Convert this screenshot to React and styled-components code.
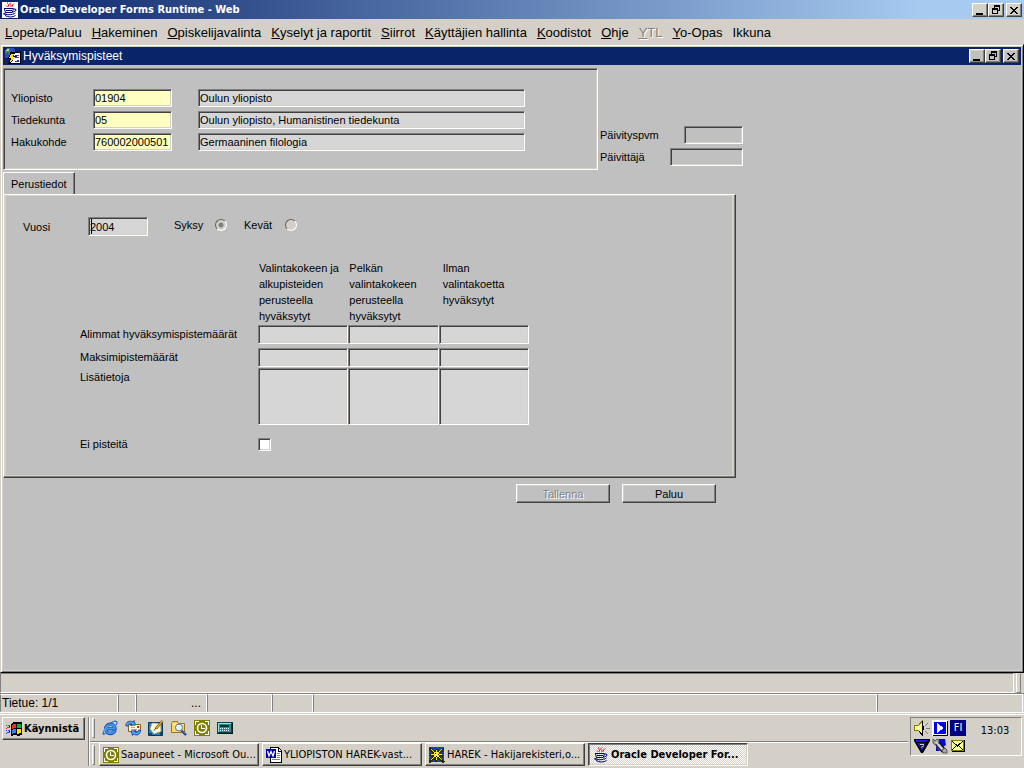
import React, { useState } from 'react';
import styled, { createGlobalStyle, css } from 'styled-components';

const GlobalStyle = createGlobalStyle`
  * {
    box-sizing: border-box;
  }

  body {
    margin: 0;
    background: #d4d0c8;
    color: #000;
    font-family: "Liberation Sans", Arial, sans-serif;
    font-size: 11px;
  }

  button, input, textarea {
    margin: 0;
    border-radius: 0;
    color: inherit;
    font: inherit;
    outline: none;
  }
`;

const raised = css`
  border: 1px solid;
  border-color: #fff #404040 #404040 #fff;
  box-shadow: inset -1px -1px #808080, inset 1px 1px #d4d0c8;
`;

const sunken = css`
  border: 1px solid;
  border-color: #808080 #fff #fff #808080;
  box-shadow: inset 1px 1px #404040, inset -1px -1px #d4d0c8;
`;

const Desktop = styled.div`
  display: flex;
  flex-direction: column;
  min-height: 100vh;
`;

/* ---- window chrome ---- */

const TitleBar = styled.header`
  display: flex;
  align-items: center;
  gap: 2px;
  height: 19px;
  padding: 0 2px;
  background: linear-gradient(to right, #0a246a, #a6caf0 90%);
  color: #fff;
  font: bold 11px/16px "DejaVu Sans Condensed", "DejaVu Sans", sans-serif;
`;

const InnerTitleBar = styled.header`
  display: flex;
  align-items: center;
  gap: 2px;
  height: 18px;
  padding: 0 2px;
  background: #0a246a;
  color: #fff;
  font-size: 12px;
`;

const WindowButtons = styled.div`
  display: flex;
  margin-left: auto;
`;

const WindowButton = styled.button`
  ${raised}
  display: flex;
  width: 16px;
  height: 14px;
  padding: 1px 2px;
  background: ${(props) => props.$face};
  color: #000;

  &:last-child {
    margin-left: 2px;
  }
`;

const MenuBar = styled.nav`
  display: flex;
  flex-wrap: wrap;
  gap: 10px;
  min-height: 25px;
  padding: 4px 5px 0;
`;

const MenuItem = styled.button`
  height: 20px;
  padding: 0;
  border: 0;
  background: none;
  font-size: 13px;
  line-height: 20px;

  &:disabled {
    color: #808080;
    text-shadow: 1px 1px #fff;
  }
`;

const InnerWindow = styled.main`
  display: flex;
  flex: 1;
  flex-direction: column;
  padding: 2px;
  border: 1px solid;
  border-color: #d4d0c8 #000 #000 #d4d0c8;
  background: #d4d0c8;
  box-shadow: inset 1px 1px #fff, inset -1px -1px #808080;
`;

const Canvas = styled.form`
  flex: 1;
  padding-top: 3px;
  background: #c0c0c0;
`;

/* ---- form ---- */

const TopArea = styled.div`
  display: flex;
  align-items: flex-end;
  gap: 2px;
`;

const KeyFrame = styled.section`
  ${sunken}
  display: grid;
  grid-template-columns: 82px 79px 353px;
  row-gap: 4px;
  width: 595px;
  padding: 20px 7px 18px;
`;

const Label = styled.label`
  line-height: 18px;
`;

const Field = styled.input`
  ${sunken}
  display: block;
  width: ${(props) => props.$width || '100%'};
  height: ${(props) => props.$height || '18px'};
  padding: 0 1px;
  background: ${(props) => props.$color || '#d6d6d6'};
`;

const NameField = styled(Field)`
  width: auto;
  margin-left: 26px;
`;

const UpdateInfo = styled.section`
  display: flex;
  flex-direction: column;
  gap: 4px;
  width: 143px;
  padding-bottom: 4px;
`;

const UpdateRow = styled.div`
  display: flex;
  justify-content: space-between;
`;

const Tab = styled.button`
  display: block;
  height: 23px;
  margin: 2px 0 -1px;
  padding: 0 7px;
  border: 1px solid;
  border-color: #fff #404040 #c0c0c0 #fff;
  background: #c0c0c0;
  box-shadow: inset -1px 0 #808080;
`;

const TabPanel = styled.section`
  width: 733px;
  padding: 22px 20px 26px 19px;
  border: 1px solid;
  border-color: #fff #404040 #404040 #fff;
  box-shadow: inset -1px -1px #808080, inset 2px 1px #d4d0c8, inset -3px -2px #d4d0c8;
`;

const YearRow = styled.div`
  display: flex;
  align-items: center;
`;

const YearLabel = styled(Label)`
  width: 65px;
`;

const CaretBox = styled.span`
  position: relative;
  margin-right: 26px;

  &::after {
    content: "";
    position: absolute;
    top: 2px;
    left: 3px;
    width: 1px;
    height: 15px;
    background: #000;
  }
`;

const RadioLabel = styled.label`
  display: flex;
  align-items: center;
  justify-content: space-between;
  width: 53px;
  height: 16px;
  margin-right: 17px;
  align-self: flex-start;
`;

const Radio = styled.input`
  appearance: none;
  width: 12px;
  height: 12px;
  margin: 0;
  border: 1px solid;
  border-color: #606060 #fff #fff #606060;
  border-radius: 50%;
  background: #d4d0c8;

  &:checked {
    background: radial-gradient(circle, #808080 2px, #d4d0c8 3px);
  }
`;

const ScoreTable = styled.table`
  margin: 24px 0 0 57px;
  border-collapse: collapse;
  table-layout: fixed;
  width: 449px;

  th {
    padding: 0;
    font-weight: normal;
    text-align: left;
    vertical-align: top;
  }

  thead th {
    height: 65px;
    padding-left: 1px;
    line-height: 16px;
    white-space: pre-line;
  }

  thead th:last-child {
    padding-left: 4px;
  }

  tbody th {
    line-height: 19px;
  }

  td {
    padding: 0;
    vertical-align: top;
  }
`;

const LabelCol = styled.col`
  width: 178px;
`;

const FieldSpacer = styled.div`
  padding-bottom: ${(props) => props.$gap};
`;

const Notes = styled.textarea`
  ${sunken}
  display: block;
  width: 100%;
  height: 57px;
  padding: 1px;
  background: #d6d6d6;
  resize: none;
`;

const CheckRow = styled.div`
  display: flex;
  align-items: center;
  margin: 13px 0 0 57px;
`;

const CheckLabel = styled.label`
  width: 178px;
  line-height: 13px;
`;

const Checkbox = styled.input`
  ${sunken}
  appearance: none;
  width: 13px;
  height: 13px;
  background: #fff;
`;

const ButtonRow = styled.div`
  display: flex;
  justify-content: flex-end;
  gap: 12px;
  width: 733px;
  padding: 6px 20px 0 0;
`;

const FormButton = styled.button`
  ${raised}
  width: 94px;
  height: 19px;
  padding: 1px 0 0;
  background: #c0c0c0;

  &:disabled {
    color: #808080;
    text-shadow: 1px 1px #fff;
  }
`;

/* ---- status lines ---- */

const MessageLine = styled.div`
  display: flex;
  gap: 2px;
  height: 20px;
  padding-right: 3px;
`;

const MessageBox = styled.div`
  flex: ${(props) => (props.$grip ? '0 0 5px' : '1')};
  border: 1px solid;
  border-color: #808080 #fff #fff #808080;
  ${(props) => props.$grip && 'border-color: #d4d0c8 #808080 #808080 #fff;'}
`;

const StatusLine = styled.footer`
  display: flex;
  height: 20px;
  padding-right: 1px;
  border-top: 1px solid #808080;
  border-bottom: 1px solid #fff;
`;

const StatusCell = styled.div`
  flex: ${(props) => (props.$width ? `0 0 ${props.$width}` : '1')};
  padding: 0 5px 0 1px;
  border: 1px solid;
  border-color: #fff #fff #d4d0c8 #808080;
  font-size: 12px;
  line-height: 17px;
  text-align: ${(props) => props.$align || 'left'};
`;

/* ---- taskbar ---- */

const Taskbar = styled.footer`
  display: flex;
  align-items: flex-start;
  height: 54px;
  margin-top: 1px;
  padding: 2px 2px 0;
  border-top: 1px solid #fff;
  font: 11px/16px "DejaVu Sans Condensed", "DejaVu Sans", sans-serif;
`;

const StartButton = styled.button`
  ${raised}
  display: flex;
  align-items: center;
  gap: 2px;
  width: 83px;
  height: 23px;
  padding: 0 3px;
  background: #d4d0c8;
  font-weight: bold;
  white-space: nowrap;
`;

const Bands = styled.div`
  flex: 1;
  min-width: 0;
  margin: 0 2px 0 3px;
  border-left: 1px solid #808080;
  box-shadow: inset 1px 0 #fff;
`;

const Band = styled.div`
  display: flex;
  align-items: center;
  gap: ${(props) => props.$gap};
  height: 24px;
  padding: 0 0 2px 3px;

  & + & {
    height: 25px;
    margin-left: 1px;
    padding: 1px 0 0 2px;
    border-top: 1px solid #808080;
    box-shadow: inset 0 1px #fff;
  }
`;

const Handle = styled.span`
  flex: none;
  width: 3px;
  height: 20px;
  border: 1px solid;
  border-color: #fff #808080 #808080 #fff;
`;

const QuickButton = styled.button`
  display: flex;
  width: 16px;
  height: 16px;
  padding: 0;
  border: 0;
  background: none;
`;

const Tasks = styled.div`
  display: flex;
  flex: 1;
  gap: 3px;
  min-width: 0;
  padding-left: 1px;
`;

const TaskButton = styled.button`
  ${raised}
  display: flex;
  align-items: center;
  gap: 2px;
  flex: 0 1 160px;
  min-width: 0;
  height: 23px;
  padding: 0 2px 0 3px;
  background: #d4d0c8;
  white-space: nowrap;

  ${(props) => props.$active && css`
    padding: 1px 1px 0 4px;
    border-color: #404040 #fff #fff #404040;
    box-shadow: inset 1px 1px #808080, inset -1px -1px #d4d0c8;
    background: repeating-conic-gradient(#fff 0 25%, #d4d0c8 0 50%) 0 0 / 2px 2px;
    font-weight: bold;
  `}
`;

const Tray = styled.div`
  display: flex;
  width: 112px;
  height: 39px;
  border: 1px solid;
  border-color: #808080 #fff #fff #808080;
`;

const TrayIcons = styled.div`
  display: grid;
  grid-template-columns: repeat(3, 16px);
  gap: 2px;
  padding: 2px 3px;
`;

const Language = styled.span`
  width: 16px;
  height: 16px;
  background: #000080;
  color: #fff;
  text-align: center;
`;

const Clock = styled.time`
  flex: 1;
  padding-top: 5px;
  text-align: center;
`;

/* ---- icons, all drawn on a 16x16 grid ---- */

const Svg = styled.svg`
  display: block;
  flex: none;
`;

function Icon({ children, smooth }) {
  return (
    <Svg width="16" height="16" viewBox="0 0 16 16" fill="none" aria-hidden="true"
      shapeRendering={smooth ? 'auto' : 'crispEdges'}>
      {children}
    </Svg>
  );
}

function JavaIcon({ boxed }) {
  return (
    <Icon smooth>
      {boxed && <path fill="#fff" d="M0 0h16v16H0z" />}
      <path stroke="#e01010" d="M5.5 0.5v1l1 1v2M9 .5l-1.500 1.500 1.500 1.500v1.500M12 1.500l-1.500 1.500v1.500M4 3.500l1.500 1.500" />
      <path stroke="#000080" d="M2 6.500h9.500M2.500 7l1 3.500h6.500l1.500-3.500M11.500 7h2l.5 1.500-3.500 2M4 8.500h6M1 11.500c1.500 1.700 10 1.700 12.500-.5M3 13.500c3 2 8 2 10.500 0M2 11.500l3-1" />
    </Icon>
  );
}

function FormsIcon() {
  return (
    <Icon>
      <path fill="#408060" d="M2 0h5l3 3v5l-3 3H2L0 8V3z" />
      <path fill="#3048c0" d="M5 0h3l2 2v3H6zM1 5l3 1v4H2L0 8z" />
      <path fill="#b0d0c0" d="M2 1h2v2H1z" />
      <path fill="#000" d="M5 4h11v12H5z" />
      <path fill="#fff" d="M6 5h9v10H6z" />
      <path stroke="#2030c0" d="M7 5.500h1M12 12.500h2M10 13.500h4" />
      <path fill="#2030c0" d="M10 7h2v3h-2z" />
      <path fill="#e02020" d="M12 7h2v1h-2zM12 9h2v1h-2z" />
      <path fill="#000" d="M6 5h4l-1 3h2l-6 8H3l2-5H2z" />
      <path fill="#ffe800" d="M6 6h3L8 9h2l-5 5 1-4H4z" />
    </Icon>
  );
}

function WindowsIcon() {
  return (
    <Icon>
      <path fill="#000" d="M5 3l3-2 3 .5L15 1l1 1v12l-4 1-3-1-4 1z" />
      <path fill="#f03030" d="M6 4l2-1.500 2 .5v4l-2-.5L6 8z" />
      <path fill="#00b040" d="M11 3l4-.5v4l-4 1z" />
      <path fill="#3080ff" d="M6 9l2-1 2 .5v4l-2-.5-2 1z" />
      <path fill="#ffe000" d="M11 8.500l4-1v4.500l-4 1z" />
      <path stroke="#e03030" d="M0 4.500h1M2 4.500h2M1 6.500h3M0 7.500h1" />
      <path stroke="#2050d0" d="M0 9.500h1M2 9.500h2M1 11.500h3M0 12.500h1" />
      <path stroke="#000" d="M3 5.500h1M3 10.500h1" />
    </Icon>
  );
}

function ExplorerIcon() {
  return (
    <Icon smooth>
      <path stroke="#1848a8" strokeWidth="3.400" d="M13 10.500c-1.200 2.300-3 3-4.800 3-2.700 0-4.500-1.800-4.500-4.500s2-4.700 4.600-4.700S13 6 13 8.700H5" />
      <path stroke="#3c98f0" strokeWidth="2" d="M12.800 10.500c-1.200 2.200-2.800 2.800-4.600 2.800-2.500 0-4.300-1.800-4.300-4.300s1.900-4.500 4.400-4.500S12.800 6 12.800 8.500H5" />
      <path stroke="#2868d0" strokeWidth="1.200" d="M3 13.500c-3 3.200-2.500-2.500 2-7.500 3.500-3.800 8-5.500 9.500-4.500 1 .8.5 2-.5 3.500" />
      <path stroke="#90d4ff" strokeWidth=".8" d="M2 12c0-2 2-5 4.500-7" />
    </Icon>
  );
}

function OutlookExpressIcon() {
  return (
    <Icon smooth>
      <path fill="#fffbd8" stroke="#806820" d="M3.500 4.500h12v7h-12z" />
      <path stroke="#c8a850" d="M6 9.500h6M6 7.500h4" />
      <path fill="#e02020" d="M12 6h2v2h-2z" />
      <path fill="#50a8ff" stroke="#103890" strokeWidth=".8" d="M1 6c-1-4 4-6 7-4l1-1.500 1.500 4.500-5 .5L7 4C5 3 3 4 3 6zM15.500 10c0 5-4 6-7 4l-1 1.500L6 11l5-.5-1.500 1.500c2 1 4 0 4-2z" />
    </Icon>
  );
}

function DesktopIcon() {
  return (
    <Icon smooth>
      <path fill="#2080c0" stroke="#003858" d="M.5 2.500h14v13H.5z" />
      <path fill="#184868" d="M1 13h3v2H1zM12 11h2v4h-2z" />
      <path fill="#fff8dc" stroke="#b09850" strokeWidth=".6" d="M4 3l8.500.500.5 8-7 2.500-4-5z" />
      <path stroke="#403000" strokeWidth="2.400" d="M14.500 1L8 8.500" />
      <path stroke="#f8b830" strokeWidth="1.200" d="M14.500 1L8 8.500" />
      <path stroke="#303030" d="M8 8l-2 2.500" />
    </Icon>
  );
}

function SearchIcon() {
  return (
    <Icon smooth>
      <path fill="#f8d868" stroke="#987810" d="M.5 3.500l1-2h5l1 2h6v9H.5z" />
      <path stroke="#fff4b0" d="M1.500 4.500h11" />
      <circle cx="8" cy="7.500" r="3.500" fill="#e0f4ff" stroke="#607890" />
      <path stroke="#203878" strokeWidth="2.400" d="M10.500 10.500l4.500 4.500" />
      <path stroke="#5890e0" d="M10.500 10l4 4" />
    </Icon>
  );
}

function OutlookIcon() {
  return (
    <Icon>
      <path fill="#808000" d="M0 0h16v16H0z" />
      <path stroke="#fff" d="M1.500 5V1.500H5M11 1.500h3.500V5M1.500 11v3.500H5M11 14.500h3.500V11" />
      <circle cx="8" cy="8" r="4.500" stroke="#fff" strokeWidth="1.600" shapeRendering="auto" />
      <path stroke="#fff" d="M7.500 5v3.500H11" />
    </Icon>
  );
}

function TerminalIcon() {
  return (
    <Icon>
      <path fill="#004848" d="M0 2h16v12H0z" />
      <path fill="#209090" d="M1 3h13v9H1z" />
      <path fill="#90e8e0" d="M1 3h13v1H1zM1 4h1v8H1z" />
      <path fill="#003030" d="M3 5h9v2H3z" />
      <path stroke="#e8ffff" strokeDasharray="1 1" d="M3 8.500h9M3 10.500h9" />
      <path stroke="#001818" d="M2 13.500h14M15.500 3v11" />
    </Icon>
  );
}

function WordIcon() {
  return (
    <Icon>
      <path fill="#fff" stroke="#000" d="M4.500.5h8l3 3v12h-11z" />
      <path stroke="#000" d="M12.500 1v3h3" />
      <path stroke="#808080" d="M11 6.500h3M11 8.500h3M11 10.500h3M6 12.500h8" />
      <path fill="#0000a8" d="M0 2h10v9H0z" />
      <path stroke="#fff" strokeWidth="1.300" shapeRendering="auto" d="M1.500 4l1.500 5 2-4.500L7 9l1.500-5" />
    </Icon>
  );
}

function HarekIcon() {
  return (
    <Icon>
      <path fill="#1048b0" d="M0 0h15v15H0z" />
      <path fill="#302800" d="M1 0l5 4 2-3 2 3 5-3v2l-3 4 3 2-3 1 4 5-2 1-5-4-2 4-2-4-4 4-2-1 4-5-3-2 3-2-3-4z" />
      <path stroke="#ffe820" strokeWidth="1.200" d="M2 2l11 11M13 2L2 13M7.500 3v10M2 7.500h11" />
      <path fill="#ffe820" d="M5 5h5v5H5z" />
      <path fill="#302800" d="M6 6h1v1H6zM9 7h1v1H9zM7 9h1v1H7z" />
      <path fill="#fff890" d="M7 7h2v1H7z" />
    </Icon>
  );
}

function SpeakerIcon() {
  return (
    <Icon>
      <path fill="#ffff60" stroke="#808000" d="M.5 5.500h4l4-5v15l-4-5h-4z" />
      <path stroke="#fff" d="M4.500 6v4" />
      <path stroke="#000" d="M8.500.5v15M5.500 11.500l3 4M9.500 6v4" />
      <path stroke="#808080" d="M11 5.500l3-2M12 8.500h4M11 11.500l3 2" />
    </Icon>
  );
}

function PlayerIcon() {
  return (
    <Icon>
      <path fill="#fff" d="M0 0h16v16H0z" />
      <path fill="#000" d="M15 1h1v15H1v-1h14z" />
      <path fill="#0000f8" d="M2 2h12v12H2z" />
      <path fill="#fff" d="M5 3l7 5-7 5z" />
    </Icon>
  );
}

function ShieldIcon() {
  return (
    <Icon smooth>
      <path fill="#000" d="M0 1h16v2L9 15H7L0 3z" />
      <path fill="#1818f0" d="M1 2h13L8 12.500z" />
      <path stroke="#000" d="M3 4.500h11M6 8.500l6-3" />
      <path stroke="#d4d0c8" d="M6 6.500h4M7 9.500l3-2" />
    </Icon>
  );
}

function ToolIcon() {
  return (
    <Icon smooth>
      <path fill="#0808d0" d="M7 1h6l1 6-3 2-4-4zM4 8l4 5H4z" />
      <path stroke="#000" strokeWidth="5" d="M4 4l8 9" />
      <path stroke="#a8a8a8" strokeWidth="3" d="M4 4l8 9" />
      <path fill="#a8a8a8" stroke="#404040" strokeWidth=".8" d="M1 1l2 2 2-2 2 1v3L4 7 1 5zM10 12l3-2 2 2v3h-4z" />
      <path stroke="#fff" d="M4 4l6 7" />
    </Icon>
  );
}

function MailIcon() {
  return (
    <Icon>
      <path fill="#ffffa0" stroke="#808000" d="M1.500 2.500h12v10h-12z" />
      <path stroke="#000" d="M14.500 2v11.500H1.500M2 3l5.500 5L13 3M2 12l4-4M13 12L9 8" />
      <path stroke="#fff" d="M3 11.500h9" />
    </Icon>
  );
}

function Glyph({ type }) {
  return (
    <Svg width="10" height="10" viewBox="0 0 10 10" fill="none" stroke="#000" shapeRendering="crispEdges" aria-hidden="true">
      {type === 'min' && <path strokeWidth="2" d="M1 9h7" />}
      {type === 'restore' && <path d="M3 .5h6M3 1.500h6M3.500 2v1M8.500 2v4M7 5.500h2M1 3.500h6M1 4.500h6M1.500 5v4M6.500 5v4M1 8.500h6" />}
      {type === 'close' && <path fill="#000" stroke="none" d="M1 2h2v1h1v1h2V3h1V2h2v1H8v1H7v1H6v1h1v1h1v1h1v1H7V8H6V7H4v1H3v1H1V8h1V7h1V6h1V5H3V4H2V3H1z" />}
    </Svg>
  );
}

function Controls({ face }) {
  return (
    <WindowButtons>
      <WindowButton type="button" $face={face} aria-label="Pienennä"><Glyph type="min" /></WindowButton>
      <WindowButton type="button" $face={face} aria-label="Palauta"><Glyph type="restore" /></WindowButton>
      <WindowButton type="button" $face={face} aria-label="Sulje"><Glyph type="close" /></WindowButton>
    </WindowButtons>
  );
}

const menus = [
  'Lopeta/Paluu', 'Hakeminen', 'Opiskelijavalinta', 'Kyselyt ja raportit', 'Siirrot',
  'Käyttäjien hallinta', 'Koodistot', 'Ohje', 'YTL', 'Yo-Opas', 'Ikkuna',
];

const keys = [
  { id: 'yliopisto', label: 'Yliopisto', code: '01904', name: 'Oulun yliopisto' },
  { id: 'tiedekunta', label: 'Tiedekunta', code: '05', name: 'Oulun yliopisto, Humanistinen tiedekunta' },
  { id: 'hakukohde', label: 'Hakukohde', code: '760002000501', name: 'Germaaninen filologia' },
];

const columns = [
  'Valintakokeen ja\nalkupisteiden\nperusteella\nhyväksytyt',
  'Pelkän\nvalintakokeen\nperusteella\nhyväksytyt',
  'Ilman\nvalintakoetta\nhyväksytyt',
];

const scoreRows = [
  { label: 'Alimmat hyväksymispistemäärät', gap: '4px' },
  { label: 'Maksimipistemäärät', gap: '1px' },
  { label: 'Lisätietoja', notes: true },
];

const quickLaunch = [
  { name: 'Internet Explorer', icon: <ExplorerIcon /> },
  { name: 'Outlook Express', icon: <OutlookExpressIcon /> },
  { name: 'Työpöytä', icon: <DesktopIcon /> },
  { name: 'Etsi', icon: <SearchIcon /> },
  { name: 'Outlook', icon: <OutlookIcon /> },
  { name: 'Pääte', icon: <TerminalIcon /> },
];

const tasks = [
  { title: 'Saapuneet - Microsoft Ou...', icon: <OutlookIcon /> },
  { title: 'YLIOPISTON HAREK-vast...', icon: <WordIcon /> },
  { title: 'HAREK - Hakijarekisteri,o...', icon: <HarekIcon /> },
  { title: 'Oracle Developer For...', icon: <JavaIcon />, active: true },
];

function App() {
  const [term, setTerm] = useState('syksy');

  return (
    <Desktop>
      <GlobalStyle />
      <TitleBar>
        <JavaIcon boxed />
        <span>Oracle Developer Forms Runtime - Web</span>
        <Controls face="#d4d0c8" />
      </TitleBar>
      <MenuBar>
        {menus.map((menu) => (
          <MenuItem key={menu} type="button" disabled={menu === 'YTL'}>
            {menu === 'Ikkuna' ? menu : <><u>{menu[0]}</u>{menu.slice(1)}</>}
          </MenuItem>
        ))}
      </MenuBar>

      <InnerWindow>
        <InnerTitleBar>
          <FormsIcon />
          <span>Hyväksymispisteet</span>
          <Controls face="#c0c0c0" />
        </InnerTitleBar>
        <Canvas onSubmit={(e) => e.preventDefault()}>
          <TopArea>
            <KeyFrame>
              {keys.map((row) => (
                <React.Fragment key={row.id}>
                  <Label htmlFor={row.id}>{row.label}</Label>
                  <Field id={row.id} $color="#ffffc0" defaultValue={row.code} />
                  <NameField aria-label={row.label + ' nimi'} value={row.name} readOnly />
                </React.Fragment>
              ))}
            </KeyFrame>
            <UpdateInfo>
              <UpdateRow>
                <Label htmlFor="paivityspvm">Päivityspvm</Label>
                <Field id="paivityspvm" $width="59px" $color="#c0c0c0" readOnly />
              </UpdateRow>
              <UpdateRow>
                <Label htmlFor="paivittaja">Päivittäjä</Label>
                <Field id="paivittaja" $width="73px" $color="#c0c0c0" readOnly />
              </UpdateRow>
            </UpdateInfo>
          </TopArea>

          <Tab type="button">Perustiedot</Tab>
          <TabPanel>
            <YearRow>
              <YearLabel htmlFor="vuosi">Vuosi</YearLabel>
              <CaretBox>
                <Field id="vuosi" $width="60px" $height="19px" defaultValue="2004" />
              </CaretBox>
              <RadioLabel>
                Syksy
                <Radio type="radio" name="kausi" checked={term === 'syksy'} onChange={() => setTerm('syksy')} />
              </RadioLabel>
              <RadioLabel>
                Kevät
                <Radio type="radio" name="kausi" checked={term === 'kevat'} onChange={() => setTerm('kevat')} />
              </RadioLabel>
            </YearRow>

            <ScoreTable>
              <colgroup>
                <LabelCol />
                <col />
                <col />
                <col />
              </colgroup>
              <thead>
                <tr>
                  <td />
                  {columns.map((text) => <th key={text} scope="col">{text}</th>)}
                </tr>
              </thead>
              <tbody>
                {scoreRows.map((row) => (
                  <tr key={row.label}>
                    <th scope="row">{row.label}</th>
                    {columns.map((text) => (
                      <td key={text}>
                        {row.notes
                          ? <Notes aria-label={row.label + ': ' + text} />
                          : (
                            <FieldSpacer $gap={row.gap}>
                              <Field $height="19px" aria-label={row.label + ': ' + text} />
                            </FieldSpacer>
                          )}
                      </td>
                    ))}
                  </tr>
                ))}
              </tbody>
            </ScoreTable>

            <CheckRow>
              <CheckLabel htmlFor="eipisteita">Ei pisteitä</CheckLabel>
              <Checkbox id="eipisteita" type="checkbox" />
            </CheckRow>
          </TabPanel>
          <ButtonRow>
            <FormButton type="submit" disabled>Tallenna</FormButton>
            <FormButton type="button">Paluu</FormButton>
          </ButtonRow>
        </Canvas>
      </InnerWindow>

      <MessageLine>
        <MessageBox />
        <MessageBox $grip />
      </MessageLine>
      <StatusLine>
        <StatusCell $width="118px">Tietue: 1/1</StatusCell>
        <StatusCell $width="18px" />
        <StatusCell $width="71px" $align="right">...</StatusCell>
        <StatusCell $width="65px" />
        <StatusCell $width="41px" />
        <StatusCell />
        <StatusCell $width="146px" />
      </StatusLine>

      <Taskbar>
        <StartButton type="button"><WindowsIcon />Käynnistä</StartButton>
        <Bands>
          <Band $gap="7px">
            <Handle />
            {quickLaunch.map((item) => (
              <QuickButton key={item.name} type="button" aria-label={item.name}>{item.icon}</QuickButton>
            ))}
          </Band>
          <Band $gap="3px">
            <Handle />
            <Tasks>
              {tasks.map((task) => (
                <TaskButton key={task.title} type="button" $active={task.active}>{task.icon}{task.title}</TaskButton>
              ))}
            </Tasks>
          </Band>
        </Bands>
        <Tray>
          <TrayIcons>
            <SpeakerIcon />
            <PlayerIcon />
            <Language>FI</Language>
            <ShieldIcon />
            <ToolIcon />
            <MailIcon />
          </TrayIcons>
          <Clock>13:03</Clock>
        </Tray>
      </Taskbar>
    </Desktop>
  );
}

export default App;
